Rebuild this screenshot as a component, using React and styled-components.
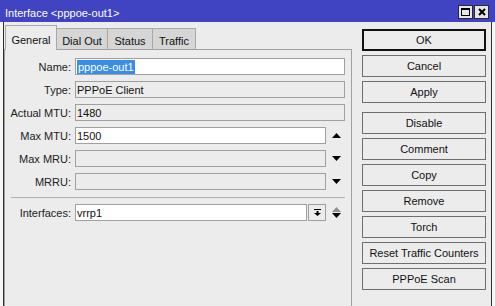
import React from 'react';
import styled, { createGlobalStyle } from 'styled-components';

const Global = createGlobalStyle`
  html, body { margin: 0; padding: 0; background: #f7f7f7; }
`;

const Window = styled.div`
  width: 495px;
  height: 306px;
  overflow: hidden;
  display: flex;
  flex-direction: column;
  background: #f7f7f7;
  font-family: "Liberation Sans", Arial, sans-serif;
  font-size: 11px;
  color: #000;
`;

const TitleBar = styled.div`
  flex: none;
  height: 22px;
  background: #4044c2;
  color: #fff;
  display: flex;
  align-items: center;
  padding: 0 6px 0 5px;
`;

const TitleText = styled.span`
  flex: 1;
  padding-top: 3px;
  font-size: 11px;
`;

const TitleButtons = styled.div`
  display: flex;
  gap: 1px;
  padding-top: 1px;
`;

const TitleButton = styled.div`
  width: 15px;
  height: 14px;
  box-sizing: border-box;
  background: #e6e6e6;
  border: 1px solid #2a2a2a;
  display: flex;
  align-items: center;
  justify-content: center;
`;

const Frame = styled.div`
  flex: 1;
  margin: 0 3px;
  border-left: 1px solid #303030;
  border-right: 1px solid #303030;
  background: #ececec;
  display: flex;
  padding-right: 5px;
`;

const LeftPane = styled.div`
  width: 348px;
  display: flex;
  flex-direction: column;
  padding-top: 3px;
`;

const Tabs = styled.div`
  display: flex;
  align-items: flex-end;
  padding-left: 1px;
  height: 25px;
  position: relative;
  z-index: 1;
  margin-bottom: -1px;
`;

const Tab = styled.div`
  box-sizing: border-box;
  width: ${p => p.$w}px;
  height: ${p => (p.$active ? '25px' : '22px')};
  padding-top: 3px;
  margin-right: -1px;
  border: 1px solid #a9a9a9;
  border-bottom: ${p => (p.$active ? 'none' : '1px solid #a0a0a0')};
  background: ${p => (p.$active ? '#ececec' : '#d6d6d6')};
  display: flex;
  align-items: center;
  justify-content: center;
  font-size: 11px;
  color: #111;
  z-index: ${p => (p.$active ? 2 : 0)};
`;

const Panel = styled.div`
  flex: 1;
  border: 1px solid #a0a0a0;
  background: #ececec;
  padding: 8px 6px 0 0;
  display: flex;
  flex-direction: column;
  min-height: 280px;
`;

const Row = styled.div`
  display: flex;
  align-items: center;
  height: 17px;
  margin-bottom: 6px;
`;

const Label = styled.div`
  width: 66px;
  margin-right: 4px;
  text-align: right;
  color: #222;
  white-space: nowrap;
`;

const Field = styled.div`
  flex: 1;
  box-sizing: border-box;
  height: 17px;
  border: 1px solid #a0a0a0;
  background: ${p => (p.$editable ? '#fff' : '#ececec')};
  padding: 0 1px;
  display: flex;
  align-items: center;
  white-space: nowrap;
  overflow: hidden;
  color: #111;
`;

const Selected = styled.span`
  background: #3a8ee6;
  color: #fff;
  line-height: 14px;
  padding: 0 1px;
`;

const Side = styled.div`
  width: 18px;
  flex: none;
  display: flex;
  flex-direction: column;
  align-items: center;
  justify-content: center;
  padding-left: 1px;
`;

const DropButton = styled.div`
  width: 18px;
  height: 17px;
  box-sizing: border-box;
  margin-left: 1px;
  border: 1px solid #a0a0a0;
  background: #ececec;
  display: flex;
  align-items: center;
  justify-content: center;
`;

const Separator = styled.div`
  height: 1px;
  background: #b0b0b0;
  margin: 1px 0 6px 6px;
`;

const RightPane = styled.div`
  width: 124px;
  margin-left: 10px;
  padding-top: 7px;
  display: flex;
  flex-direction: column;
`;

const Button = styled.div`
  box-sizing: border-box;
  height: 22px;
  margin-bottom: ${p => (p.$gapAfter ? '9px' : '4px')};
  border: 1px solid #6f6f6f;
  box-shadow: ${p => (p.$default ? 'inset 0 0 0 1px #111' : 'none')};
  border-color: ${p => (p.$default ? '#111' : '#6f6f6f')};
  background: #ececec;
  display: flex;
  align-items: center;
  justify-content: center;
  font-size: 11px;
  color: #111;
  white-space: nowrap;
`;

const Tri = ({ up, color = '#000' }) => (
  <svg width="9" height="5" viewBox="0 0 9 5">
    <path d={up ? 'M4.5 0 L9 5 L0 5 Z' : 'M0 0 L9 0 L4.5 5 Z'} fill={color} />
  </svg>
);

const tabs = [
  { text: 'General', w: 52, active: true },
  { text: 'Dial Out', w: 52 },
  { text: 'Status', w: 46 },
  { text: 'Traffic', w: 44 },
];

const fields = [
  { label: 'Name:', value: 'pppoe-out1', editable: true, selected: true },
  { label: 'Type:', value: 'PPPoE Client' },
  { label: 'Actual MTU:', value: '1480' },
  { label: 'Max MTU:', value: '1500', editable: true, side: 'up' },
  { label: 'Max MRU:', value: '', side: 'down' },
  { label: 'MRRU:', value: '', side: 'down' },
];

const buttons = [
  { text: 'OK', def: true },
  { text: 'Cancel' },
  { text: 'Apply', gap: true },
  { text: 'Disable' },
  { text: 'Comment' },
  { text: 'Copy' },
  { text: 'Remove' },
  { text: 'Torch' },
  { text: 'Reset Traffic Counters' },
  { text: 'PPPoE Scan' },
];

export default function App() {
  return (
    <Window>
      <Global />
      <TitleBar>
        <TitleText>Interface &lt;pppoe-out1&gt;</TitleText>
        <TitleButtons>
          <TitleButton>
            <svg width="9" height="8" viewBox="0 0 9 8">
              <rect x="0.5" y="0.5" width="8" height="7" fill="none" stroke="#000" />
              <rect x="0" y="0" width="9" height="2" fill="#000" />
            </svg>
          </TitleButton>
          <TitleButton>
            <svg width="8" height="8" viewBox="0 0 8 8">
              <path d="M1 1 L7 7 M7 1 L1 7" stroke="#000" strokeWidth="2" />
            </svg>
          </TitleButton>
        </TitleButtons>
      </TitleBar>
      <Frame>
        <LeftPane>
          <Tabs>
            {tabs.map(t => (
              <Tab key={t.text} $active={t.active} $w={t.w}>
                {t.text}
              </Tab>
            ))}
          </Tabs>
          <Panel>
            {fields.map(f => (
              <Row key={f.label}>
                <Label>{f.label}</Label>
                <Field $editable={f.editable}>
                  {f.selected ? <Selected>{f.value}</Selected> : f.value}
                </Field>
                {f.side && (
                  <Side>
                    <Tri up={f.side === 'up'} />
                  </Side>
                )}
              </Row>
            ))}
            <Separator />
            <Row>
              <Label>Interfaces:</Label>
              <Field $editable>vrrp1</Field>
              <DropButton>
                <svg width="7" height="7" viewBox="0 0 7 7">
                  <rect x="0" y="0" width="7" height="1" fill="#000" />
                  <rect x="2.5" y="2" width="2" height="2" fill="#000" />
                  <path d="M0 4 L7 4 L3.5 7 Z" fill="#000" />
                </svg>
              </DropButton>
              <Side>
                <Tri up color="#8a948a" />
                <div style={{ height: 1 }} />
                <Tri />
              </Side>
            </Row>
          </Panel>
        </LeftPane>
        <RightPane>
          {buttons.map(b => (
            <Button key={b.text} $default={b.def} $gapAfter={b.gap}>
              {b.text}
            </Button>
          ))}
        </RightPane>
      </Frame>
    </Window>
  );
}
